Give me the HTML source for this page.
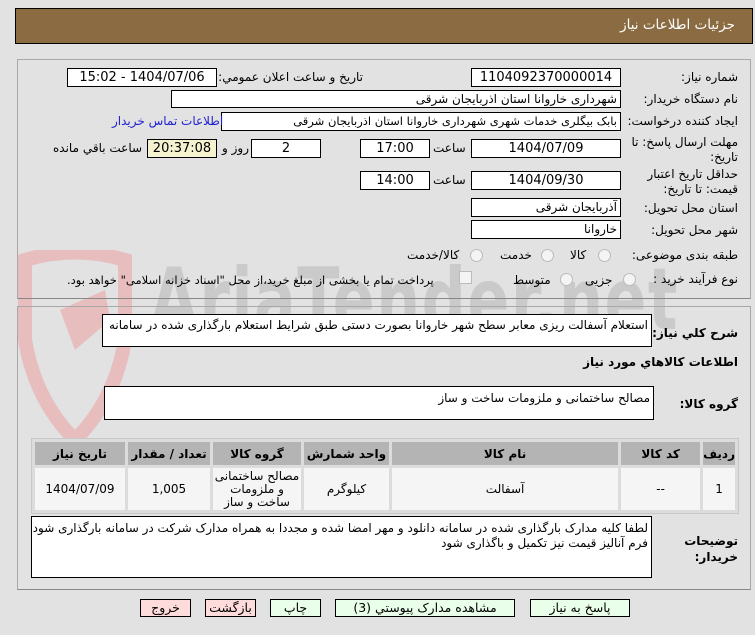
<!DOCTYPE html>
<html><head><meta charset="utf-8">
<style>
*{margin:0;padding:0;box-sizing:border-box}
body{width:755px;height:635px;background:#e2e2e2;position:relative;overflow:hidden;font-family:"DejaVu Sans","Liberation Sans",sans-serif;font-size:12px;color:#000}
.a{position:absolute;white-space:nowrap}
.r{direction:rtl;text-align:right}
.box{position:absolute;background:#fff;border:1px solid #000;direction:rtl;text-align:center;line-height:17px;font-size:13px;overflow:hidden;white-space:nowrap}
.bl{text-align:right;padding-right:3px;font-size:12px}
.lab{position:absolute;direction:rtl;text-align:right;font-size:12px;white-space:nowrap}
.rad{position:absolute;width:13px;height:13px;border-radius:50%;border:1px solid #bbb;background:#f4f4f4}
.btn{position:absolute;top:599px;height:18px;border:1px solid #000;text-align:center;line-height:16px;font-size:12.5px;direction:rtl}
.g{background:#eaffea}.p{background:#ffdcdc}
table{position:absolute;left:31px;top:438px;width:708px;border-spacing:3px;background:#dcdcdc;border:1px solid #c8c8c8;direction:rtl}
th{background:#b4b4b4;height:23px;font-size:12px;font-weight:bold}
td{background:#f5f5f5;height:42px;text-align:center;font-size:12px;line-height:13px}
</style></head><body>
<svg class="a" style="left:15px;top:250px" width="120" height="200" viewBox="0 0 120 200"><path d="M10 10 Q60 -5 110 10 L110 90 Q100 150 60 190 Q20 150 10 90 Z" fill="none" stroke="#e8b4b4" stroke-width="14" opacity="0.8"/><path d="M45 60 L90 40 L95 70 L60 100 Z" fill="#e8b4b4" opacity="0.8"/></svg>
<div class="a" style="left:150px;top:250px;font-size:86px;font-weight:bold;color:#cacaca;letter-spacing:2px;transform:scaleX(0.72);transform-origin:left">AriaTender.net</div>

<div class="a" style="left:15px;top:8px;width:738px;height:36px;background:#8b6b42;border:1px solid #000"></div>
<div class="a r" style="right:20px;top:17px;color:#fff;font-size:13.5px">جزئيات اطلاعات نياز</div>

<div class="a" style="left:17px;top:59px;width:734px;height:240px;border:1px solid #a8a8a8;border-bottom-color:#888"></div>
<div class="a" style="left:17px;top:306px;width:734px;height:284px;border:1px solid #a8a8a8;border-bottom-color:#888"></div>

<div class="lab" style="right:17px;top:70px">شماره نياز:</div>
<div class="box" style="left:471px;top:68px;width:150px;height:19px">1104092370000014</div>
<div class="lab" style="right:392px;top:70px">تاريخ و ساعت اعلان عمومي:</div>
<div class="box" style="left:67px;top:68px;width:150px;height:19px">1404/07/06 - 15:02</div>

<div class="lab" style="right:17px;top:92px">نام دستگاه خريدار:</div>
<div class="box bl" style="left:171px;top:90px;width:450px;height:18px">شهرداری خاروانا استان اذربایجان شرقی</div>

<div class="lab" style="right:17px;top:114px">ايجاد كننده درخواست:</div>
<div class="box bl" style="left:221px;top:112px;width:400px;height:19px;font-size:11.5px">بابک بیگلری خدمات شهری شهرداری خاروانا استان اذربایجان شرقی</div>
<div class="lab" style="left:112px;top:114px;color:#2020d0">اطلاعات تماس خريدار</div>

<div class="lab" style="right:17px;top:135px;line-height:15px">مهلت ارسال پاسخ: تا<br>تاريخ:</div>
<div class="box" style="left:471px;top:139px;width:150px;height:19px">1404/07/09</div>
<div class="lab" style="left:433px;top:141px">ساعت</div>
<div class="box" style="left:360px;top:139px;width:70px;height:19px">17:00</div>
<div class="box" style="left:251px;top:139px;width:70px;height:19px">2</div>
<div class="lab" style="left:222px;top:141px">روز و</div>
<div class="box" style="left:147px;top:139px;width:70px;height:19px;background:#f5f2d0">20:37:08</div>
<div class="lab" style="left:53px;top:141px">ساعت باقي مانده</div>

<div class="lab" style="right:17px;top:167px;line-height:15px">حداقل تاريخ اعتبار<br>قيمت: تا تاريخ:</div>
<div class="box" style="left:471px;top:171px;width:150px;height:19px">1404/09/30</div>
<div class="lab" style="left:433px;top:173px">ساعت</div>
<div class="box" style="left:360px;top:171px;width:70px;height:19px">14:00</div>

<div class="lab" style="right:17px;top:201px">استان محل تحويل:</div>
<div class="box bl" style="left:471px;top:198px;width:150px;height:19px">آذربایجان شرقی</div>
<div class="lab" style="right:17px;top:223px">شهر محل تحويل:</div>
<div class="box bl" style="left:471px;top:220px;width:150px;height:19px">خاروانا</div>

<div class="lab" style="right:17px;top:248px">طبقه بندی موضوعی:</div>
<div class="rad" style="left:598px;top:249px"></div><div class="lab" style="left:570px;top:248px">کالا</div>
<div class="rad" style="left:541px;top:249px"></div><div class="lab" style="left:500px;top:248px">خدمت</div>
<div class="rad" style="left:470px;top:249px"></div><div class="lab" style="left:407px;top:248px">کالا/خدمت</div>

<div class="lab" style="right:17px;top:272px">نوع فرآيند خريد :</div>
<div class="rad" style="left:623px;top:273px"></div><div class="lab" style="left:585px;top:273px">جزیی</div>
<div class="rad" style="left:560px;top:273px"></div><div class="lab" style="left:513px;top:273px">متوسط</div>
<div class="a" style="left:459px;top:271px;width:13px;height:13px;border:1px solid #bbb;background:#f4f4f4"></div>
<div class="lab" style="left:67px;top:273px;font-size:11.5px">پرداخت تمام يا بخشی از مبلغ خريد،از محل "اسناد خزانه اسلامی" خواهد بود.</div>

<div class="lab" style="right:17px;top:326px;font-weight:bold">شرح كلي نياز:</div>
<div class="box bl" style="left:102px;top:314px;width:550px;height:33px;line-height:20px;font-size:12px">استعلام آسفالت ریزی معابر سطح شهر خاروانا بصورت دستی طبق شرایط استعلام بارگذاری شده در سامانه</div>
<div class="lab" style="right:17px;top:355px;font-weight:bold">اطلاعات كالاهاي مورد نياز</div>
<div class="lab" style="right:17px;top:397px;font-weight:bold">گروه كالا:</div>
<div class="box bl" style="left:104px;top:386px;width:550px;height:34px;line-height:22px">مصالح ساختمانی و ملزومات ساخت و ساز</div>

<table>
<tr><th style="width:26px">رديف</th><th style="width:79px">كد كالا</th><th>نام كالا</th><th style="width:85px">واحد شمارش</th><th style="width:88px">گروه كالا</th><th style="width:82px">تعداد / مقدار</th><th style="width:90px">تاريخ نياز</th></tr>
<tr><td>1</td><td>--</td><td>آسفالت</td><td>کیلوگرم</td><td>مصالح ساختمانی و ملزومات ساخت و ساز</td><td>1,005</td><td>1404/07/09</td></tr>
</table>

<div class="lab" style="right:17px;top:533px;font-weight:bold;line-height:16px">توضيحات<br>خريدار:</div>
<div class="box bl" style="left:31px;top:516px;width:621px;height:62px;line-height:15px;white-space:normal;padding-top:4px;font-size:12px">لطفا کلیه مدارک بارگذاری شده در سامانه دانلود و مهر امضا شده و مجددا به همراه مدارک شرکت در سامانه بارگذاری شود فرم آنالیز قیمت نیز تکمیل و باگذاری شود</div>

<div class="btn g" style="left:530px;width:100px">پاسخ به نياز</div>
<div class="btn g" style="left:335px;width:180px">مشاهده مدارک پيوستي (3)</div>
<div class="btn g" style="left:270px;width:51px">چاپ</div>
<div class="btn p" style="left:205px;width:51px">بازگشت</div>
<div class="btn p" style="left:140px;width:51px">خروج</div>
</body></html>
